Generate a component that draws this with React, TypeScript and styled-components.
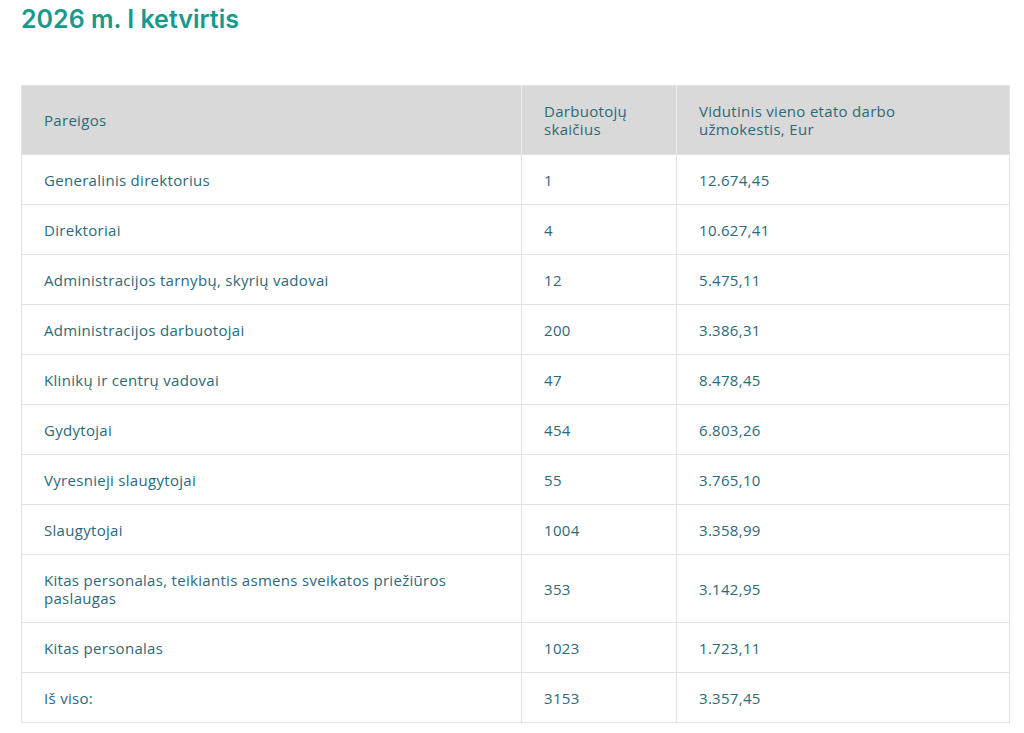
import styled, { createGlobalStyle } from "styled-components";

const GlobalStyle = createGlobalStyle`
  body {
    margin: 0;
    background: #fff;
    font-family: "Open Sans", "Liberation Sans", sans-serif;
  }
`;

const rows = [
  { title: "Generalinis direktorius", count: "1", pay: "12.674,45" },
  { title: "Direktoriai", count: "4", pay: "10.627,41" },
  { title: "Administracijos tarnybų, skyrių vadovai", count: "12", pay: "5.475,11" },
  { title: "Administracijos darbuotojai", count: "200", pay: "3.386,31" },
  { title: "Klinikų ir centrų vadovai", count: "47", pay: "8.478,45" },
  { title: "Gydytojai", count: "454", pay: "6.803,26" },
  { title: "Vyresnieji slaugytojai", count: "55", pay: "3.765,10" },
  { title: "Slaugytojai", count: "1004", pay: "3.358,99" },
  {
    title: "Kitas personalas, teikiantis asmens sveikatos priežiūros paslaugas",
    count: "353",
    pay: "3.142,95",
  },
  { title: "Kitas personalas", count: "1023", pay: "1.723,11" },
  { title: "Iš viso:", count: "3153", pay: "3.357,45" },
];

const App = () => {
  return (
    <Page>
      <GlobalStyle />
      <Title>2026 m. I ketvirtis</Title>
      <Table>
        <colgroup>
          <col style={{ width: 500 }} />
          <col style={{ width: 155 }} />
          <col />
        </colgroup>
        <thead>
          <tr>
            <Th>Pareigos</Th>
            <Th>
              Darbuotojų
              <br />
              skaičius
            </Th>
            <Th>
              Vidutinis vieno etato darbo
              <br />
              užmokestis, Eur
            </Th>
          </tr>
        </thead>
        <tbody>
          {rows.map((row) => (
            <tr key={row.title}>
              <Td>{row.title}</Td>
              <Td>{row.count}</Td>
              <Td>{row.pay}</Td>
            </tr>
          ))}
        </tbody>
      </Table>
    </Page>
  );
};

const Page = styled.main`
  padding: 4px 14px 10px 21px;
`;

const Title = styled.h2`
  margin: 0 0 51px;
  font-family: "Inter", "Liberation Sans", sans-serif;
  font-weight: 600;
  font-size: 25px;
  line-height: 30px;
  color: #17998b;
`;

const Table = styled.table`
  width: 989px;
  border-collapse: collapse;
  table-layout: fixed;
  border: 1px solid #e2e2e2;
  color: #2b6a78;
  font-size: 15px;
  letter-spacing: 0.3px;
  line-height: 18px;
`;

const Th = styled.th`
  background: #d9d9d9;
  padding: 16px 22px;
  text-align: left;
  font-weight: 400;
  vertical-align: middle;
  border-left: 1px solid #ececec;
  &:first-child {
    border-left: none;
  }
`;

const Td = styled.td`
  padding: 16px 22px 15px;
  vertical-align: middle;
  border: 1px solid #e2e2e2;
`;

export default App;
